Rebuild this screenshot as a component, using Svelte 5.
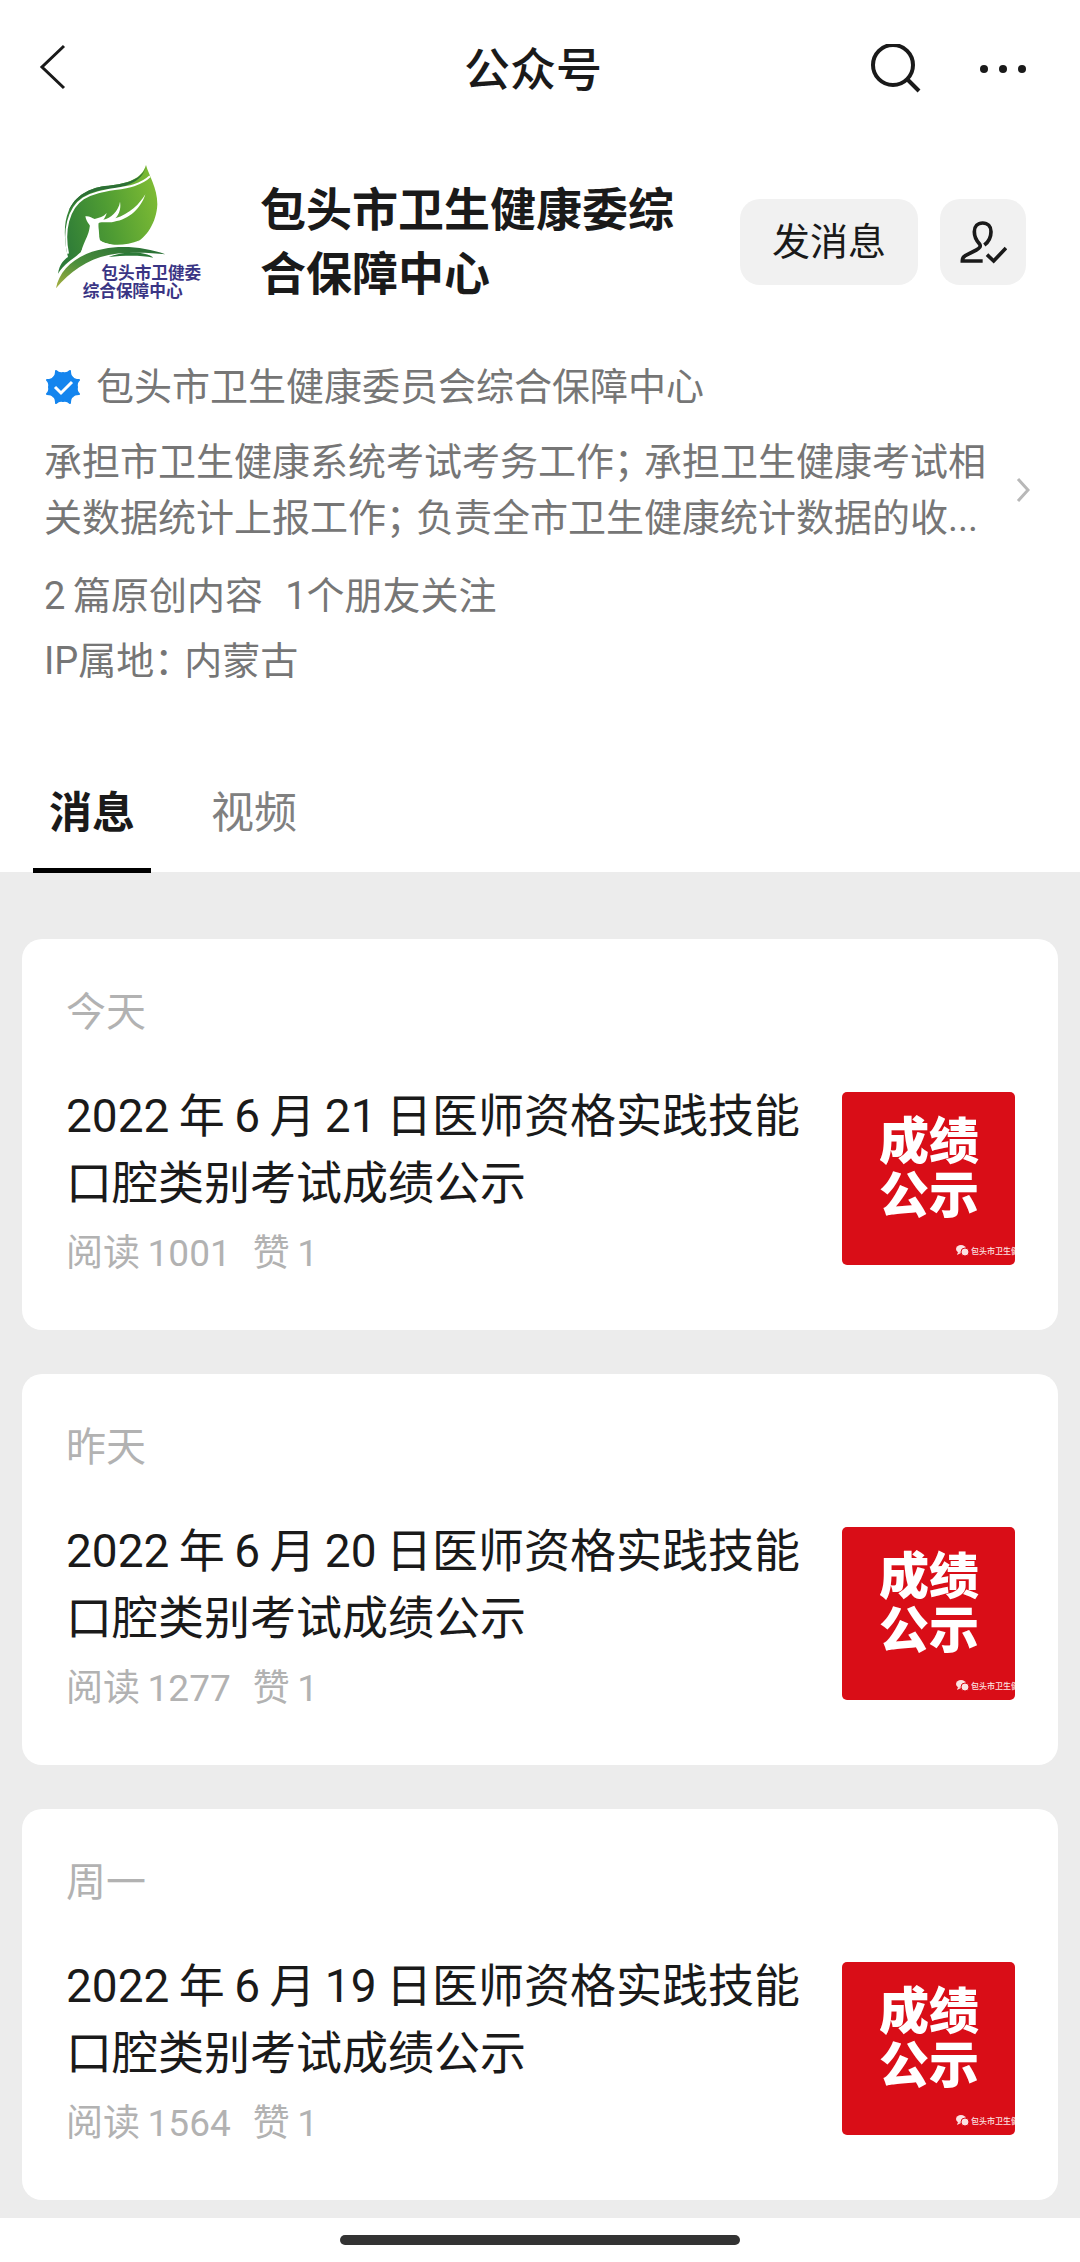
<script>
  let activeTab = $state('消息');
  let following = $state(true);

  const tabs = ['消息', '视频'];

  // dates are set with thin spaces between digits and characters
  const posts = [
    { day: '今天', title: '2022\u2009年\u20096\u2009月\u200921\u2009日医师资格实践技能口腔类别考试成绩公示', reads: 1001, likes: 1 },
    { day: '昨天', title: '2022\u2009年\u20096\u2009月\u200920\u2009日医师资格实践技能口腔类别考试成绩公示', reads: 1277, likes: 1 },
    { day: '周一', title: '2022\u2009年\u20096\u2009月\u200919\u2009日医师资格实践技能口腔类别考试成绩公示', reads: 1564, likes: 1 }
  ];
</script>

<main>
  <header class="topbar">
    <button class="icon-button" aria-label="返回">
      <svg width="32" height="52" viewBox="0 0 32 52" fill="none" stroke="#1a1a1a" stroke-width="3">
        <path d="M28 2 L6 23 L28 44" />
      </svg>
    </button>
    <h1>公众号</h1>
    <div class="topbar-actions">
      <button class="icon-button" aria-label="搜索">
        <svg width="52" height="52" viewBox="0 0 52 52" fill="none" stroke="#1a1a1a" stroke-width="4">
          <circle cx="23" cy="21" r="20" />
          <path d="M37 35 L49 47" />
        </svg>
      </button>
      <button class="icon-button" aria-label="更多">
        <svg width="52" height="52" viewBox="0 0 52 52" fill="#1a1a1a">
          <circle cx="6" cy="25" r="4" />
          <circle cx="25" cy="25" r="4" />
          <circle cx="44" cy="25" r="4" />
        </svg>
      </button>
    </div>
  </header>

  <section class="profile">
    <div class="identity">
      <svg class="logo" width="180" height="160" viewBox="0 33 540 480" role="img" aria-label="包头市卫健委综合保障中心">
        <defs>
          <linearGradient id="leaf" x1="0" y1="0.6" x2="1" y2="0.3">
            <stop offset="0" stop-color="#2c7a38" />
            <stop offset="0.5" stop-color="#4f9c33" />
            <stop offset="1" stop-color="#7dbb34" />
          </linearGradient>
          <linearGradient id="stem" x1="0" y1="1" x2="1" y2="0">
            <stop offset="0" stop-color="#a9b040" />
            <stop offset="0.4" stop-color="#4c8f3c" />
            <stop offset="1" stop-color="#246b35" />
          </linearGradient>
        </defs>
        <!-- leaf -->
        <path fill="url(#leaf)" d="M318 42 C326 72 352 110 352 160 C350 215 318 262 285 276 C250 290 205 284 178 268 C178 250 176 228 172 208 L140 200 L150 225 C150 262 130 290 122 304 C105 320 72 338 54 368 C58 340 72 326 84 318 C74 280 68 220 86 180 C104 134 150 108 205 104 C262 98 306 84 318 42 Z" />
        <path fill="#2c6f36" d="M318 42 C312 84 262 98 205 104 C150 108 104 134 86 180 C108 142 150 118 208 114 C264 108 312 88 318 42 Z" />
        <path fill="none" stroke="#fff" stroke-width="6" d="M84 308 C70 240 84 172 130 142 C190 104 280 124 330 76" />
        <!-- deer -->
        <path fill="#fff" d="M136 196 C146 194 156 200 164 204 C178 200 190 198 200 186 C198 194 194 202 190 206 C212 202 236 180 240 152 C244 174 236 192 226 202 C268 190 300 158 316 130 C304 170 268 206 222 212 C204 216 186 212 176 216 C172 236 176 256 180 268 C200 284 250 288 300 268 C262 300 220 300 190 298 L122 316 C124 280 148 256 150 222 C142 216 138 206 136 196 Z" />
        <!-- stem -->
        <path fill="url(#stem)" d="M48 412 C58 356 110 308 190 294 C250 282 320 290 376 310 C330 304 250 302 206 312 C140 326 90 362 48 412 Z" />
        <path fill="#2c7a38" d="M206 318 C256 298 320 302 340 320 C300 312 250 314 206 318 Z" />
        <text class="logo-text" x="184" y="383">包头市卫健委</text>
        <text class="logo-text" x="128" y="437">综合保障中心</text>
      </svg>
      <h2>包头市卫生健康委综合保障中心</h2>
      <div class="actions">
        <button class="pill message">发消息</button>
        <button class="pill follow" aria-label="已关注" aria-pressed={following} onclick={() => (following = !following)}>
          <svg width="48" height="48" viewBox="718 111 144 144" fill="none" stroke="#1a1a1a" stroke-width="11">
            <path d="M794 192 C810 180 814 164 814 152 C814 136 804 126 789 126 C774 126 764 136 764 152 C764 168 770 178 779 188 C785 196 780 202 770 207 L737 224 C730 228 728 232 728 240 L789 240" />
            <path d="M802 221 L822 240 L859 201" />
          </svg>
        </button>
      </div>
    </div>

    <div class="verified">
      <svg width="38" height="38" viewBox="0 0 38 38">
        <path fill="#1485ee" stroke="#1485ee" stroke-width="2" stroke-linejoin="round" d="M35 12 Q32 15 33 19 Q32 23 35 26 Q30 26 28.5 28.5 Q26 30 26 35 Q23 32 19 33 Q15 32 12 35 Q12 30 9.5 28.5 Q8 26 3 26 Q6 23 5 19 Q6 15 3 12 Q8 12 9.5 9.5 Q12 8 12 3 Q15 6 19 5 Q23 6 26 3 Q26 8 28.5 9.5 Q30 12 35 12 Z" />
        <path fill="none" stroke="#fff" stroke-width="3" d="M11 19 L17 25 L28 14" />
      </svg>
      <span>包头市卫生健康委员会综合保障中心</span>
    </div>

    <a class="intro" href="#intro">
      <p>承担市卫生健康系统考试考务工作<span class="half">；</span>承担卫生健康考试相关数据统计上报工作<span class="half">；</span>负责全市卫生健康统计数据的收...</p>
      <svg width="14" height="26" viewBox="0 0 14 26" fill="none" stroke="#b8b8b8" stroke-width="3">
        <path d="M2 2 L12 13 L2 24" />
      </svg>
    </a>

    <p class="stats"><span>2&thinsp;篇原创内容</span><span>1个朋友关注</span></p>
    <p class="region">IP属地<span class="half">：</span>内蒙古</p>
  </section>

  <nav class="tabs">
    {#each tabs as tab}
      <button class="tab" class:active={activeTab === tab} onclick={() => (activeTab = tab)}>{tab}</button>
    {/each}
  </nav>

  <section class="feed">
    {#each posts as post}
      <article class="card">
        <p class="day">{post.day}</p>
        <div class="post">
          <div class="post-body">
            <h3>{post.title}</h3>
            <p class="meta"><span>阅读&thinsp;{post.reads}</span><span>赞&thinsp;{post.likes}</span></p>
          </div>
          <svg class="thumb" width="173" height="173" viewBox="0 0 173 173" role="img" aria-label="成绩公示">
            <rect width="173" height="173" fill="#d90d17" />
            <text class="thumb-title" x="37" y="67">成绩</text>
            <text class="thumb-title" x="37" y="121">公示</text>
            <g fill="#fbe3e3">
              <ellipse cx="119" cy="157" rx="5" ry="4" />
              <path d="M116 160 L115 163 L119 161 Z" />
              <ellipse cx="123" cy="160" rx="4" ry="4" stroke="#d90d17" stroke-width="1" />
            </g>
            <text class="thumb-mark" x="129" y="162">包头市卫生健</text>
          </svg>
        </div>
      </article>
    {/each}
  </section>

  <footer class="home">
    <div class="home-bar"></div>
  </footer>
</main>

<style>
  :global(body) {
    background: #fff;
  }

  main {
    font-family: Roboto, "Noto Sans CJK SC", sans-serif;
    color: #1a1a1a;
    background: #fff;
  }

  h1, h2, h3, p {
    margin: 0;
  }

  svg {
    display: block;
    flex: none;
  }

  button {
    font: inherit;
    color: inherit;
    background: none;
    border: none;
    padding: 0;
    cursor: pointer;
  }

  .topbar {
    display: grid;
    grid-template-columns: 1fr auto 1fr;
    align-items: center;
    height: 140px;
    padding: 0 50px 0 36px;
  }

  .icon-button {
    justify-self: start;
  }

  h1 {
    font-size: 46px;
    line-height: 64px;
    font-weight: 500;
  }

  .topbar-actions {
    display: flex;
    justify-content: flex-end;
    gap: 56px;
  }

  .profile {
    padding: 22px 50px 0 44px;
    font-size: 38px;
    line-height: 56px;
    color: #767676;
  }

  .identity {
    display: flex;
    align-items: center;
    gap: 40px;
    margin: 0 4px 0 -4px;
  }

  h2 {
    flex: 1;
    font-size: 46px;
    line-height: 64px;
    font-weight: 700;
    color: #1a1a1a;
  }

  .actions {
    display: flex;
    gap: 22px;
  }

  .pill {
    display: flex;
    align-items: center;
    justify-content: center;
    height: 86px;
    border-radius: 20px;
    background: #f1f1f1;
    color: #1a1a1a;
  }

  .message {
    width: 178px;
  }

  .follow {
    width: 86px;
  }

  .logo-text {
    font-size: 50px;
    font-weight: 700;
    fill: #3a3584;
  }

  .verified {
    display: flex;
    align-items: center;
    gap: 14px;
    margin-top: 37px;
  }

  .intro {
    display: flex;
    align-items: center;
    gap: 16px;
    margin-top: 19px;
    color: inherit;
    text-decoration: none;
  }

  .intro p {
    flex: 1;
  }

  /* narrow full-width punctuation */
  .half {
    font-feature-settings: "halt";
    margin-right: 11px;
  }

  .stats {
    display: flex;
    gap: 22px;
    margin-top: 22px;
  }

  .region {
    margin-top: 9px;
  }

  .tabs {
    display: flex;
    gap: 44px;
    margin: 96px 0 -1px;
    padding: 0 33px;
  }

  .tab {
    padding: 0 16px 27px;
    border-bottom: 5px solid transparent;
    font-size: 43px;
    line-height: 56px;
    color: #808080;
  }

  .tab.active {
    border-color: #000;
    color: #1a1a1a;
    font-weight: 700;
    z-index: 1;
  }

  .feed {
    display: flex;
    flex-direction: column;
    gap: 44px;
    padding: 67px 22px 18px;
    background: #ececec;
  }

  .card {
    padding: 46px 43px 51px 44px;
    border-radius: 20px;
    background: #fff;
  }

  .day {
    font-size: 40px;
    line-height: 56px;
    color: #b2b2b2;
  }

  .post {
    display: flex;
    align-items: flex-start;
    gap: 30px;
    margin-top: 42px;
  }

  .post-body {
    flex: 1;
  }

  h3 {
    font-size: 46px;
    line-height: 67px;
    font-weight: 400;
  }

  .meta {
    display: flex;
    gap: 22px;
    margin-top: 12px;
    font-size: 37px;
    line-height: 50px;
    color: #b2b2b2;
  }

  .thumb {
    margin-top: 9px;
    border-radius: 5px;
  }

  .thumb-title {
    font-size: 50px;
    font-weight: 900;
    fill: #fff;
  }

  .thumb-mark {
    font-size: 8px;
    font-weight: 500;
    fill: #fbe3e3;
  }

  .home {
    display: flex;
    justify-content: center;
    padding: 17px 0;
  }

  .home-bar {
    width: 37%;
    height: 10px;
    border-radius: 5px;
    background: #333;
  }
</style>
